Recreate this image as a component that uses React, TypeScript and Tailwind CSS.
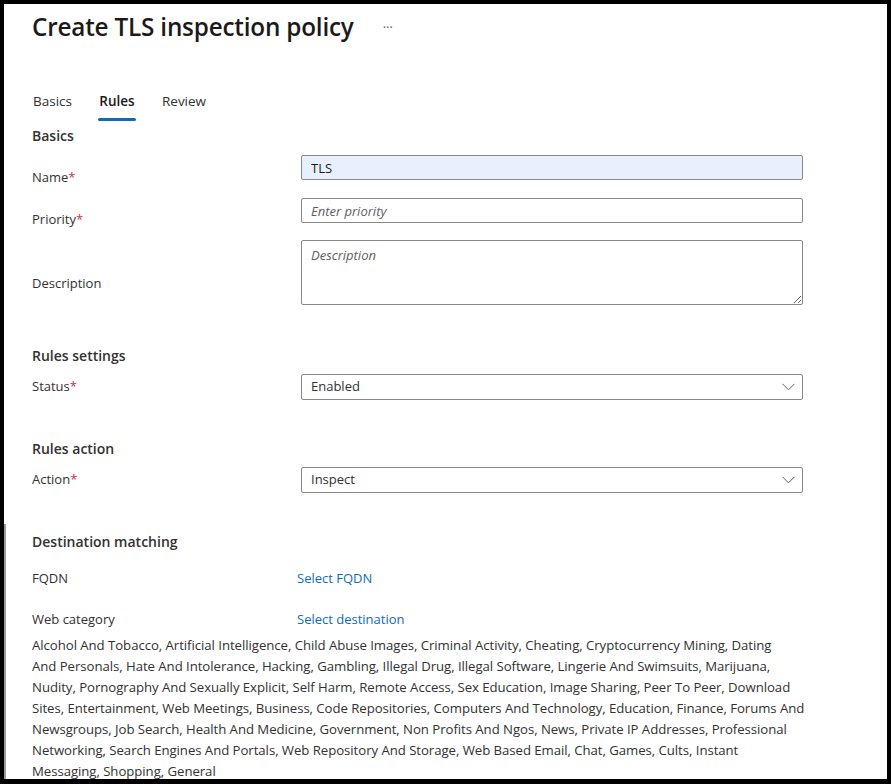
// Web categories, wrapped the way the portal lays them out
const categoryLines = [
  "Alcohol And Tobacco, Artificial Intelligence, Child Abuse Images, Criminal Activity, Cheating, Cryptocurrency Mining, Dating",
  "And Personals, Hate And Intolerance, Hacking, Gambling, Illegal Drug, Illegal Software, Lingerie And Swimsuits, Marijuana,",
  "Nudity, Pornography And Sexually Explicit, Self Harm, Remote Access, Sex Education, Image Sharing, Peer To Peer, Download",
  "Sites, Entertainment, Web Meetings, Business, Code Repositories, Computers And Technology, Education, Finance, Forums And",
  "Newsgroups, Job Search, Health And Medicine, Government, Non Profits And Ngos, News, Private IP Addresses, Professional",
  "Networking, Search Engines And Portals, Web Repository And Storage, Web Based Email, Chat, Games, Cults, Instant",
  "Messaging, Shopping, General",
];

function Label({ text, required, className }: { text: string; required?: boolean; className?: string }) {
  return (
    <div className={`shrink-0 self-start text-[13px] leading-5 text-[#323130] ${className ?? "w-[269px]"}`}>
      {text}
      {required && <span className="text-[#c4314b]">*</span>}
    </div>
  );
}

function Chevron() {
  return (
    <svg width="13" height="8" viewBox="0 0 13 8" className="text-[#605e5c]">
      <polyline points="0.5,0.8 6.5,6.8 12.5,0.8" fill="none" stroke="currentColor" strokeWidth="1" />
    </svg>
  );
}

function Select({ value }: { value: string }) {
  return (
    <div className="flex h-[26px] w-[502px] items-center justify-between rounded-[2px] border border-[#8a8886] bg-white pl-[9px] pr-[7px] text-[13px] text-[#323130]">
      <span>{value}</span>
      <Chevron />
    </div>
  );
}

function SectionTitle({ children, className }: { children: string; className?: string }) {
  return <div className={`text-[14px] font-semibold leading-5 text-[#323130] ${className ?? ""}`}>{children}</div>;
}

export default function App() {
  return (
    <div
      className="relative h-[784px] w-[891px] overflow-hidden border-t-4 border-r-4 border-b-[5px] border-l-4 border-black bg-white"
      style={{ fontFamily: '"Open Sans", "Noto Sans", sans-serif' }}
    >
      {/* lower-left grey edge of the frame */}
      <div className="absolute bottom-0 left-0 top-[520px] w-[2px] bg-[#9a9a9a]" />

      <div className="pl-[28px]">
        <div className="mt-[6px] flex items-center">
          <h1 className="text-[24.3px] font-semibold leading-[34px] tracking-[-0.2px] text-[#1b1a19]">
            Create TLS inspection policy
          </h1>
          <span className="ml-[29px] text-[13px] leading-[34px] text-[#605e5c]">···</span>
        </div>

        <div className="mt-[47px] flex gap-[26px] pl-[1px] text-[13.5px] leading-5">
          <div className="text-[#323130]">Basics</div>
          <div className="flex flex-col items-center">
            <div className="font-semibold text-[#1b1a19]">Rules</div>
            <div className="mt-[7px] h-[3px] w-[38px] rounded-full bg-[#0f6cbd]" />
          </div>
          <div className="text-[#323130]">Review</div>
        </div>

        <SectionTitle className="mt-[5px]">Basics</SectionTitle>

        <div className="mt-[9px] flex h-[25px]">
          <Label text="Name" required className="w-[269px] pt-[12px]" />
          <input
            readOnly
            value="TLS"
            className="h-[25px] w-[502px] rounded-[2px] border border-[#8a8886] bg-[#e8f0fe] px-[9px] text-[13px] text-[#1b1a19] outline-none"
          />
        </div>

        <div className="mt-[18px] flex h-[25px]">
          <Label text="Priority" required className="w-[269px] pt-[11px]" />
          <input
            placeholder="Enter priority"
            className="h-[25px] w-[502px] rounded-[2px] border border-[#8a8886] bg-white px-[9px] text-[13px] italic text-[#323130] outline-none placeholder:text-[#605e5c]"
          />
        </div>

        <div className="mt-[17px] flex h-[65px]">
          <Label text="Description" className="w-[269px] pt-[33px]" />
          <textarea
            placeholder="Description"
            className="h-[65px] w-[502px] rounded-[2px] border border-[#8a8886] bg-white px-[9px] py-[5px] text-[13px] italic text-[#323130] outline-none placeholder:text-[#605e5c]"
          />
        </div>

        <SectionTitle className="mt-[41px]">Rules settings</SectionTitle>
        <div className="mt-[8px] flex h-[26px]">
          <Label text="Status" required className="w-[269px] pt-[2px]" />
          <Select value="Enabled" />
        </div>

        <SectionTitle className="mt-[39px]">Rules action</SectionTitle>
        <div className="mt-[8px] flex h-[26px]">
          <Label text="Action" required className="w-[269px] pt-[2px]" />
          <Select value="Inspect" />
        </div>

        <SectionTitle className="mt-[39px]">Destination matching</SectionTitle>
        <div className="mt-[16px] flex text-[13px] leading-5">
          <Label text="FQDN" className="w-[265px]" />
          <a className="text-[#0f6cbd]">Select FQDN</a>
        </div>
        <div className="mt-[21px] flex text-[13px] leading-5">
          <Label text="Web category" className="w-[265px]" />
          <a className="text-[#0f6cbd]">Select destination</a>
        </div>

        <div className="mt-[6px] text-[13.2px] leading-[21px] tracking-[-0.05px] text-[#323130]">
          {categoryLines.map((line) => (
            <div key={line} className="whitespace-nowrap">
              {line}
            </div>
          ))}
        </div>
      </div>
    </div>
  );
}
